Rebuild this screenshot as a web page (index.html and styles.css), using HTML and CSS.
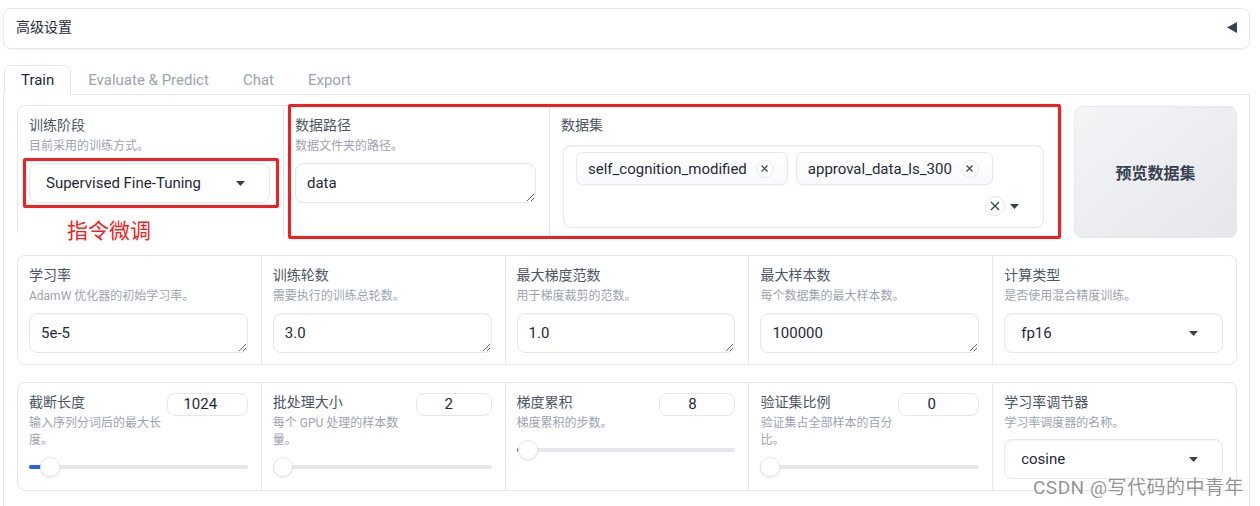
FILE: index.html
```html
<!DOCTYPE html>
<html lang="zh-CN">
<head>
<meta charset="utf-8">
<title>LLaMA Board</title>
<link rel="stylesheet" href="styles.css">
</head>
<body>
<div class="app">
  <div class="accordion">
    <span class="acc-title">高级设置</span>
    <svg class="acc-icon" width="10" height="11" viewBox="0 0 10 11"><path d="M10 0V11L0 5.5Z" fill="#374151"/></svg>
  </div>

  <div class="tabs">
    <div class="tab-nav">
      <div class="tab active">Train</div>
      <div class="tab">Evaluate &amp; Predict</div>
      <div class="tab">Chat</div>
      <div class="tab">Export</div>
    </div>

    <div class="panel">
      <div class="row1">
        <div class="group g3">
          <div class="col first">
            <div class="label">训练阶段</div>
            <div class="info">目前采用的训练方式。</div>
            <div class="dd-wrap">
              <div class="dd"><span>Supervised Fine-Tuning</span><svg class="caret" width="9" height="5" viewBox="0 0 9 5"><path d="M0 0H9L4.5 5Z" fill="#374151"/></svg></div>
              <div class="mark mark-dd"></div>
            </div>
            <div class="note">指令微调</div>
          </div>
          <div class="col">
            <div class="label">数据路径</div>
            <div class="info">数据文件夹的路径。</div>
            <textarea class="tb" rows="1">data</textarea>
          </div>
          <div class="col last">
            <div class="label">数据集</div>
            <div class="ms">
              <div class="chips">
                <div class="chip"><span>self_cognition_modified</span><span class="x"><svg width="7" height="7" viewBox="0 0 7 7"><path d="M0.5 0.5L6.5 6.5M6.5 0.5L0.5 6.5" stroke="#374151" stroke-width="1.2"/></svg></span></div>
                <div class="chip"><span>approval_data_ls_300</span><span class="x"><svg width="7" height="7" viewBox="0 0 7 7"><path d="M0.5 0.5L6.5 6.5M6.5 0.5L0.5 6.5" stroke="#374151" stroke-width="1.2"/></svg></span></div>
              </div>
              <div class="ms-foot">
                <span class="x clear"><svg width="10" height="10" viewBox="0 0 10 10"><path d="M1 1L9 9M9 1L1 9" stroke="#374151" stroke-width="1.3"/></svg></span>
                <svg class="caret" width="9" height="5" viewBox="0 0 9 5"><path d="M0 0H9L4.5 5Z" fill="#374151"/></svg>
              </div>
            </div>
          </div>
          <div class="mark mark-data"></div>
        </div>
        <div class="btn">预览数据集</div>
      </div>

      <div class="group g5">
        <div class="col first">
          <div class="label">学习率</div>
          <div class="info">AdamW 优化器的初始学习率。</div>
          <textarea class="tb" rows="1">5e-5</textarea>
        </div>
        <div class="col">
          <div class="label">训练轮数</div>
          <div class="info">需要执行的训练总轮数。</div>
          <textarea class="tb" rows="1">3.0</textarea>
        </div>
        <div class="col">
          <div class="label">最大梯度范数</div>
          <div class="info">用于梯度裁剪的范数。</div>
          <textarea class="tb" rows="1">1.0</textarea>
        </div>
        <div class="col">
          <div class="label">最大样本数</div>
          <div class="info">每个数据集的最大样本数。</div>
          <textarea class="tb" rows="1">100000</textarea>
        </div>
        <div class="col last">
          <div class="label">计算类型</div>
          <div class="info">是否使用混合精度训练。</div>
          <div class="dd"><span>fp16</span><svg class="caret" width="9" height="5" viewBox="0 0 9 5"><path d="M0 0H9L4.5 5Z" fill="#374151"/></svg></div>
        </div>
      </div>

      <div class="group g5">
        <div class="col first">
          <div class="shead">
            <div class="stext"><div class="label">截断长度</div><div class="info">输入序列分词后的最大长度。</div></div>
            <div class="num wide">1024</div>
          </div>
          <div class="slider" style="--v:0.055"><div class="track"><div class="fill"></div></div><div class="thumb"></div></div>
        </div>
        <div class="col">
          <div class="shead">
            <div class="stext"><div class="label">批处理大小</div><div class="info">每个 GPU 处理的样本数量。</div></div>
            <div class="num">2</div>
          </div>
          <div class="slider" style="--v:0"><div class="track"><div class="fill"></div></div><div class="thumb"></div></div>
        </div>
        <div class="col">
          <div class="shead">
            <div class="stext"><div class="label">梯度累积</div><div class="info">梯度累积的步数。</div></div>
            <div class="num">8</div>
          </div>
          <div class="slider" style="--v:0.007"><div class="track"><div class="fill"></div></div><div class="thumb"></div></div>
        </div>
        <div class="col">
          <div class="shead">
            <div class="stext"><div class="label">验证集比例</div><div class="info">验证集占全部样本的百分比。</div></div>
            <div class="num wide">0</div>
          </div>
          <div class="slider" style="--v:0"><div class="track"><div class="fill"></div></div><div class="thumb"></div></div>
        </div>
        <div class="col last">
          <div class="label">学习率调节器</div>
          <div class="info">学习率调度器的名称。</div>
          <div class="dd dd-low"><span>cosine</span><svg class="caret" width="9" height="5" viewBox="0 0 9 5"><path d="M0 0H9L4.5 5Z" fill="#374151"/></svg></div>
        </div>
      </div>
    </div>
  </div>
</div>
<div class="watermark">CSDN @写代码的中青年</div>
</body>
</html>
```

FILE: styles.css
```css
* { box-sizing: border-box; }
html, body { margin: 0; padding: 0; overflow: hidden; background: #fff; }
body {
  width: 1260px;
  height: 506px;
  position: relative;
  font-family: Roboto, "Noto Sans CJK SC", sans-serif;
  color: #1f2937;
}
.app { padding: 8px 10px 0 3px; }

.accordion {
  height: 41px;
  border: 1px solid #e5e7eb;
  border-radius: 8px;
  box-shadow: 0 1px 2px rgba(0,0,0,0.05);
  display: flex;
  align-items: center;
  justify-content: space-between;
  padding: 0 12px 3px 12px;
  font-size: 14px;
  line-height: 20px;
  color: #1f2937;
}
.acc-icon { display: block; margin-top: 1px; }

.tabs { margin-top: 16px; }
.tab-nav { display: flex; height: 30px; position: relative; z-index: 1; }
.tab {
  padding: 0 16px;
  font-size: 15px;
  line-height: 29px;
  color: #9ca3af;
  border: 1px solid transparent;
  border-bottom: none;
}
.tab.active {
  color: #1f2937;
  background: #fff;
  border-color: #e5e7eb;
  border-radius: 6px 6px 0 0;
  margin-left: 1px;
}
.panel {
  border: 1px solid #e5e7eb;
  border-bottom: none;
  margin-top: -1px;
  padding: 10px 12px 40px 13px;
  display: flex;
  flex-direction: column;
  gap: 17px;
}

.group {
  border: 1px solid #e5e7eb;
  border-radius: 8px;
  background: #e5e7eb;
  display: grid;
  gap: 1px;
  position: relative;
}
.col { background: #fff; padding: 9px 13px 11px 11px; position: relative; }
.col.first { border-radius: 7px 0 0 7px; }
.col.last { border-radius: 0 7px 7px 0; }

.row1 { display: flex; gap: 12px; height: 133px; }
.g3 { flex: 0 0 1045px; grid-template-columns: 265px 265px 1fr; }
.g5 { grid-template-columns: repeat(5, 1fr); }

.label { font-size: 14px; line-height: 20px; color: #4b5563; }
.info { font-size: 12px; line-height: 17px; color: #9ca3af; margin-top: 3px; }

.tb, .dd {
  display: block;
  width: 100%;
  height: 40px;
  margin-top: 8px;
  border: 1px solid #e5e7eb;
  border-radius: 8px;
  background: #fff;
  box-shadow: inset 0 1px 2px rgba(0,0,0,0.05);
  font-family: Roboto, "Noto Sans CJK SC", sans-serif;
  font-size: 15px;
  color: #1f2937;
}
.tb { padding: 9px 11px; line-height: 20px; overflow: hidden; outline: none; }
.dd {
  display: flex;
  align-items: center;
  justify-content: space-between;
  padding: 0 24px 0 16px;
}
.dd.dd-low { margin-top: 7px; }
.dd-wrap { position: relative; margin-top: 8px; }
.dd-wrap .dd { margin-top: 0; }
.caret { display: block; flex: none; }

.mark { position: absolute; border: 3px solid #f51d1d; border-radius: 2px; pointer-events: none; }
.mark-dd { left: -6px; right: -9px; top: -5px; bottom: -5px; }
.mark-data { left: 270px; right: 0; top: -2px; bottom: -2px; }
.note {
  position: absolute;
  left: 49px;
  top: 112px;
  font-size: 21px;
  line-height: 26px;
  color: #f52020;
}

.ms {
  margin: 10px 4px 0 2px;
  height: 83px;
  border: 1px solid #e5e7eb;
  border-radius: 8px;
  box-shadow: inset 0 1px 2px rgba(0,0,0,0.05);
  padding: 6px 12px 0 12px;
}
.chips { display: flex; gap: 8px; }
.chip {
  height: 33px;
  display: flex;
  align-items: center;
  gap: 9px;
  padding: 0 13px 0 11px;
  border: 1px solid #e5e7eb;
  border-radius: 7px;
  background: linear-gradient(#fff, #f9fafb);
  box-shadow: 0 1px 2px rgba(0,0,0,0.04);
  font-size: 15px;
  color: #1f2937;
}
.x {
  width: 18px;
  height: 18px;
  border: 1px solid #e5e7eb;
  border-radius: 50%;
  display: flex;
  align-items: center;
  justify-content: center;
  background: #fff;
}
.x svg { display: block; }
.ms-foot {
  display: flex;
  align-items: center;
  justify-content: flex-end;
  gap: 5px;
  margin-top: 11px;
  height: 20px;
  padding-right: 12px;
}
.x.clear { width: 20px; height: 20px; }

.btn {
  flex: 1;
  margin-top: 1px;
  border: 1px solid #e5e7eb;
  border-radius: 8px;
  background: linear-gradient(to bottom right, #f3f4f6, #e5e7eb);
  display: flex;
  align-items: center;
  justify-content: center;
  font-size: 16px;
  font-weight: 700;
  color: #374151;
}

.shead { display: flex; align-items: flex-start; }
.stext { flex: 0 1 134px; min-width: 0; }
.num {
  flex: 0 0 76px;
  margin-left: auto;
  height: 23px;
  margin-top: 1px;
  border: 1px solid #e5e7eb;
  border-radius: 8px;
  font-size: 15px;
  line-height: 21px;
  text-align: center;
  padding-right: 10px;
  color: #1f2937;
}
.num.wide { flex-basis: 81px; padding-right: 14px; }
.slider { position: relative; height: 20px; margin-top: 8px; }
.track {
  position: absolute;
  left: 0; right: 0; top: 8px;
  height: 4px;
  border-radius: 2px;
  background: #e5e7eb;
  overflow: hidden;
}
.fill {
  position: absolute;
  left: 0; top: 0; bottom: 0;
  background: #2563eb;
  width: calc(var(--v) * (100% - 20px) + 10px);
}
.thumb {
  position: absolute;
  top: 0;
  left: calc(var(--v) * (100% - 20px));
  width: 20px;
  height: 20px;
  border-radius: 50%;
  background: #fff;
  border: 1px solid #e5e7eb;
  box-shadow: 0 1px 2px rgba(0,0,0,0.1);
}

.watermark {
  position: absolute;
  left: 1033px;
  top: 475px;
  font-size: 19px;
  line-height: 26px;
  letter-spacing: 0.5px;
  color: rgba(128,128,128,0.85);
  text-shadow: 0 0 2px #fff;
  white-space: nowrap;
}
```
